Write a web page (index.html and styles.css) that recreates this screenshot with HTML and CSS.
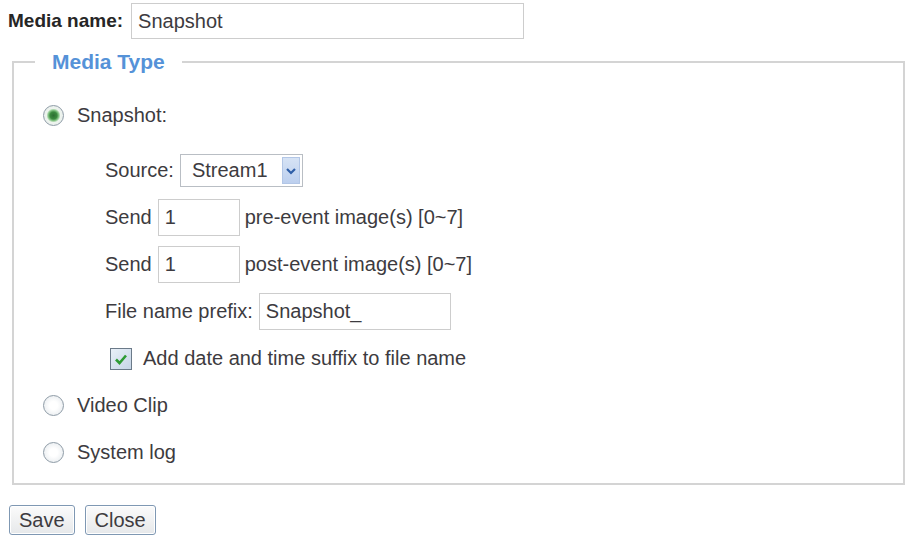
FILE: index.html
```html
<!DOCTYPE html>
<html lang="en">
<head>
    <meta charset="UTF-8">
    <title>Media Settings</title>
    <link rel="stylesheet" href="styles.css">
</head>
<body>
    <div class="page">
        <div class="name-row">
            <label class="name-label" for="media-name">Media name:</label>
            <input id="media-name" class="text name-input" type="text" value="Snapshot">
        </div>

        <fieldset class="media-type">
            <legend>Media Type</legend>

            <div class="opt opt-first"><span class="radio on"></span>Snapshot:</div>

            <div class="sub">
                <div class="row">
                    <span>Source:</span>
                    <div class="select">
                        <span class="select-value">Stream1</span>
                        <span class="select-btn">
                            <svg width="12" height="10" viewBox="0 0 12 10"><path d="M2 3 L6 7 L10 3" fill="none" stroke="#2f5fa8" stroke-width="2.2"/></svg>
                        </span>
                    </div>
                </div>
                <div class="row">
                    <span>Send</span>
                    <input class="text num" type="text" value="1">
                    <span>pre-event image(s) [0~7]</span>
                </div>
                <div class="row">
                    <span>Send</span>
                    <input class="text num" type="text" value="1">
                    <span>post-event image(s) [0~7]</span>
                </div>
                <div class="row">
                    <span>File name prefix:</span>
                    <input class="text prefix" type="text" value="Snapshot_">
                </div>
                <div class="row check-row">
                    <span class="check">
                        <svg width="16" height="16" viewBox="0 0 16 16"><path d="M3 8.5 L6.5 12 L13 4.5" fill="none" stroke="#2e9b34" stroke-width="2.6"/></svg>
                    </span>
                    <span>Add date and time suffix to file name</span>
                </div>
            </div>

            <div class="opt"><span class="radio"></span>Video Clip</div>
            <div class="opt"><span class="radio"></span>System log</div>
        </fieldset>

        <div class="buttons">
            <button class="btn">Save</button>
            <button class="btn">Close</button>
        </div>
    </div>
</body>
</html>
```

FILE: styles.css
```css
body {
    margin: 0;
    background: #fff;
    font-family: "Liberation Sans", Arial, sans-serif;
    font-size: 20px;
    color: #3d3b40;
}

.page {
    padding: 3px 0 0 8px;
}

.name-row {
    display: flex;
    align-items: center;
    height: 36px;
}

.name-label {
    font-weight: bold;
    font-size: 19px;
    color: #262626;
    margin-right: 8px;
}

.text {
    box-sizing: border-box;
    border: 1px solid #cdcdcd;
    background: #fff;
    font-family: inherit;
    font-size: 20px;
    color: #3d3b40;
    padding: 0 6px;
    margin: 0;
    outline: none;
}

.name-input {
    width: 393px;
    height: 36px;
}

.num {
    width: 82px;
    height: 37px;
    margin: 0 5px 0 6px;
}

.prefix {
    width: 192px;
    height: 37px;
    margin-left: 6px;
}

/* group box */
.media-type {
    margin: 11px 2px 0 4px;
    padding: 18px 0 7px 21px;
    border: 2px solid #d4d4d4;
    min-width: 0;
}

.media-type legend {
    padding: 0 17px;
    font-size: 21px;
    line-height: 24px;
    font-weight: bold;
    color: #5592d8;
}

.opt {
    display: flex;
    align-items: center;
    height: 47px;
    padding-left: 8px;
}

.opt-first {
    margin-bottom: 8px;
}

.radio {
    box-sizing: border-box;
    width: 21px;
    height: 21px;
    border-radius: 50%;
    border: 1.5px solid #8e9ba6;
    background: radial-gradient(circle, #ffffff 30%, #e1e6ea 100%);
    margin-right: 13px;
    flex-shrink: 0;
}

.radio.on {
    background: radial-gradient(circle, #2c6e32 0, #3b8a3f 3.5px, #8fcb8f 5.5px, #eef4ee 7px, #e4e9ec 100%);
}

.sub {
    padding-left: 70px;
}

.row {
    display: flex;
    align-items: center;
    height: 47px;
}

/* dropdown */
.select {
    box-sizing: border-box;
    display: flex;
    align-items: center;
    justify-content: space-between;
    width: 123px;
    height: 33px;
    margin-left: 6px;
    border: 1px solid #b9bec4;
    background: #fff;
    padding: 0 2px 0 11px;
}

.select-btn {
    display: flex;
    align-items: center;
    justify-content: center;
    width: 18px;
    height: 27px;
    background: linear-gradient(#d6e3f5, #bccfee);
    border: 1px solid #b2c6e6;
    box-sizing: border-box;
}

.check-row {
    padding-left: 5px;
}

.check {
    box-sizing: border-box;
    display: flex;
    align-items: center;
    justify-content: center;
    width: 22px;
    height: 22px;
    border: 1.5px solid #6b7a89;
    background: linear-gradient(135deg, #e9f0f8, #c6d5e6);
    margin-right: 11px;
}

.buttons {
    display: flex;
    gap: 10px;
    margin-top: 20px;
    padding-left: 1px;
}

.btn {
    height: 30px;
    padding: 0 9px;
    font-family: inherit;
    font-size: 20px;
    color: #3d3b40;
    border: 1px solid #7f98b3;
    border-radius: 3px;
    background: linear-gradient(#fbfbfb, #e6e8ea);
    box-shadow: inset 0 0 0 1px #fff;
}
```
